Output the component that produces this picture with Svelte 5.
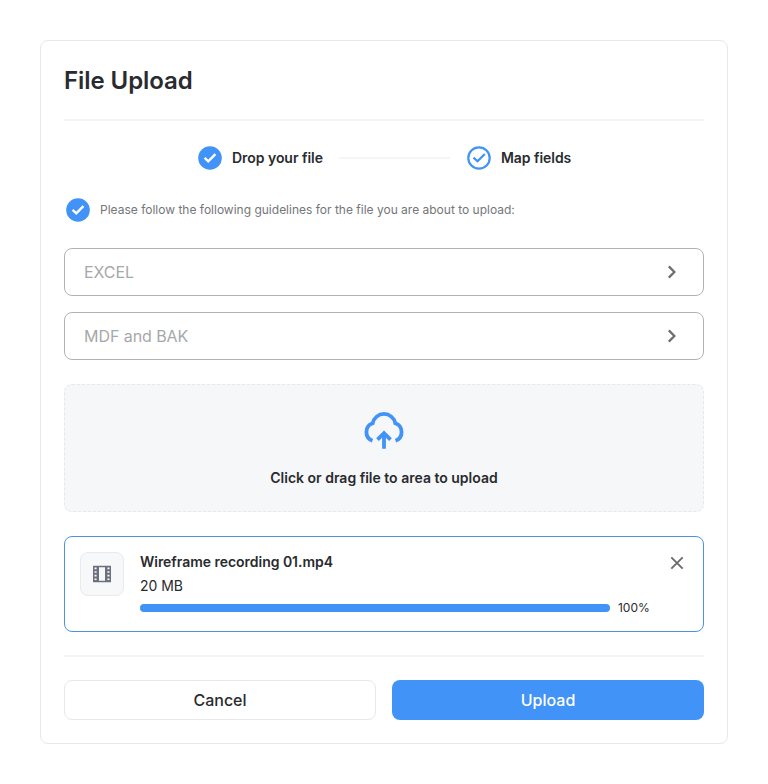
<script>
  const formats = ['EXCEL', 'MDF and BAK'];
  const progress = 100;
</script>

{#snippet solidCheck()}
  <svg class="check" width="24" height="24" viewBox="0 0 24 24" fill="none">
    <circle cx="12" cy="12" r="11.8" fill="#4193f7" />
    <path d="M6.6 11.8 10.3 15.3 17.4 8.1" stroke="#fff" stroke-width="2.4" />
  </svg>
{/snippet}

<main class="card">
  <h1>File Upload</h1>
  <hr />

  <div class="steps">
    <div class="step">{@render solidCheck()}<span>Drop your file</span></div>
    <div class="connector"></div>
    <div class="step">
      <svg class="check" width="24" height="24" viewBox="0 0 24 24" fill="none" stroke="#4193f7" stroke-width="2.2">
        <circle cx="12" cy="12" r="10.7" />
        <path d="M6.5 11.6 10.5 15.3 17.8 8" />
      </svg>
      <span>Map fields</span>
    </div>
  </div>

  <div class="note">
    {@render solidCheck()}
    <span>Please follow the following guidelines for the file you are about to upload:</span>
  </div>

  <div class="formats">
    {#each formats as format}
      <button class="format">
        <span>{format}</span>
        <svg width="10" height="14" viewBox="0 0 10 14" fill="none" stroke="#6b6c6e" stroke-width="2.2">
          <path d="M1.8 1.4 7.4 7 1.8 12.6" />
        </svg>
      </button>
    {/each}
  </div>

  <div class="drop">
    <svg width="42" height="38" viewBox="0 0 42 38" fill="none" stroke="#4193f7" stroke-width="3.6">
      <path d="M10 29.2A8.8 8.8 0 0 1 10.2 12.6 11 11 0 0 1 31.8 12.6 8.8 8.8 0 0 1 32 29.2" />
      <path d="M21 37V22.6M14.8 28.2 21 22 27.2 28.2" />
    </svg>
    <span>Click or drag file to area to upload</span>
  </div>

  <section class="file">
    <div class="thumb">
      <svg width="20" height="18" viewBox="0 0 20 18">
        <path fill="#6c7180" fill-rule="evenodd" d="M1 .7H19V17.3H1ZM7 2.3V15.7H13V2.3ZM2.5 2.6V4.2H4.6V2.6ZM2.5 6.2V7.8H4.6V6.2ZM2.5 9.8V11.4H4.6V9.8ZM2.5 13.4V15H4.6V13.4ZM15.4 2.6V4.2H17.5V2.6ZM15.4 6.2V7.8H17.5V6.2ZM15.4 9.8V11.4H17.5V9.8ZM15.4 13.4V15H17.5V13.4Z" />
      </svg>
    </div>
    <div class="info">
      <div class="name">Wireframe recording 01.mp4</div>
      <div class="size">20 MB</div>
      <div class="progress">
        <div class="track"><div class="fill" style="width: {progress}%"></div></div>
        <span>{progress}%</span>
      </div>
    </div>
    <button class="close" aria-label="Remove file">
      <svg width="14" height="14" viewBox="0 0 14 14" fill="none" stroke="#6b6c6e" stroke-width="1.9">
        <path d="M1.3 1.3 12.7 12.7M12.7 1.3 1.3 12.7" />
      </svg>
    </button>
  </section>

  <hr />

  <div class="actions">
    <button class="cancel">Cancel</button>
    <button class="upload">Upload</button>
  </div>
</main>

<style>
  :global(body) {
    background: #fff;
  }
  .card,
  .card * {
    box-sizing: border-box;
  }
  .card {
    width: 688px;
    height: 704px;
    margin: 40px;
    padding: 23px;
    border: 1px solid #e8e8ea;
    border-radius: 8px;
    background: #fff;
    color: #292b2e;
    font-family: Inter, 'Liberation Sans', sans-serif;
    display: flow-root;
  }
  svg {
    display: block;
    flex: none;
  }
  button {
    font: inherit;
    background: none;
    border: 0;
    padding: 0;
    margin: 0;
  }
  h1 {
    margin: 0;
    height: 55px;
    font-size: 24px;
    line-height: 33px;
    font-weight: 600;
    letter-spacing: -0.07px;
  }
  hr {
    margin: 0;
    border: 0;
    height: 2px;
    background: #f4f4f5;
  }
  .steps {
    display: flex;
    align-items: center;
    height: 24px;
    margin-top: 25px;
    padding-left: 134px;
  }
  .step {
    display: flex;
    align-items: center;
    gap: 10px;
    font-size: 14px;
    font-weight: 600;
    letter-spacing: -0.04px;
  }
  .step span,
  .note span {
    padding-bottom: 2px;
  }
  .connector {
    width: 111px;
    height: 2px;
    margin: 0 17px 0 16px;
    background: #f5f5f6;
  }
  .note {
    display: flex;
    align-items: center;
    gap: 10px;
    height: 24px;
    margin-top: 28px;
    padding-left: 2px;
    font-size: 12px;
    color: #747678;
  }
  .formats {
    display: flex;
    flex-direction: column;
    gap: 16px;
    margin-top: 26px;
  }
  .format {
    display: flex;
    align-items: center;
    justify-content: space-between;
    height: 48px;
    padding: 0 26px 0 19px;
    border: 1px solid #b0b2b4;
    border-radius: 8px;
    font-size: 16px;
    letter-spacing: -0.06px;
    color: #a6a8aa;
  }
  .drop {
    display: flex;
    flex-direction: column;
    align-items: center;
    height: 128px;
    margin-top: 24px;
    padding-top: 25px;
    border: 1px dashed #e7e8ea;
    border-radius: 8px;
    background: #f6f7f9;
    font-size: 14px;
    line-height: 20px;
    font-weight: 600;
  }
  .drop svg {
    width: 44px;
    height: 40px;
  }
  .drop span {
    margin-top: 18px;
  }
  .file {
    display: flex;
    height: 96px;
    margin-top: 24px;
    margin-bottom: 23px;
    padding: 15px;
    border: 1px solid #4b92e3;
    border-radius: 8px;
  }
  .thumb {
    display: flex;
    align-items: center;
    justify-content: center;
    width: 44px;
    height: 44px;
    border: 1px solid #e9eaec;
    border-radius: 8px;
    background: #f7f8f9;
  }
  .info {
    width: 520px;
    margin-left: 16px;
    font-size: 14px;
    line-height: 20px;
    letter-spacing: -0.03px;
  }
  .name {
    font-weight: 600;
  }
  .size {
    margin-top: 4px;
  }
  .progress {
    display: flex;
    align-items: center;
    gap: 8px;
    height: 16px;
    margin-top: 4px;
    font-size: 12px;
  }
  .track {
    width: 470px;
    height: 8px;
    border-radius: 4px;
    background: #edf0f4;
  }
  .fill {
    height: 8px;
    border-radius: 4px;
    background: #4193f7;
  }
  .close {
    align-self: flex-start;
    margin: 4px 0 0 10px;
  }
  .actions {
    display: grid;
    grid-template-columns: 1fr 1fr;
    gap: 16px;
    margin-top: 23px;
  }
  .actions button {
    height: 40px;
    border-radius: 8px;
    font-size: 16px;
    font-weight: 500;
  }
  .cancel {
    border: 1px solid #e8e8ea;
    color: #292b2e;
  }
  .upload {
    background: #4193f7;
    color: #fff;
  }
</style>
